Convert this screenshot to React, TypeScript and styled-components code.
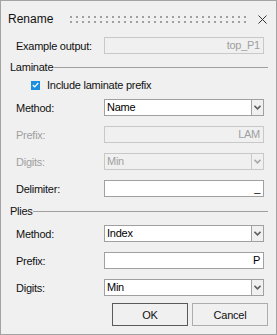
import React from "react";
import styled, { createGlobalStyle } from "styled-components";

const GlobalStyle = createGlobalStyle`
  html, body { margin: 0; padding: 0; background: #f0f0f0; }
  * { box-sizing: border-box; }
`;

const Window = styled.div`
  width: 277px;
  height: 335px;
  border: 1px solid #a3a3a3;
  background: #f0f0f0;
  font-family: "Liberation Sans", Arial, sans-serif;
  font-size: 11px;
  letter-spacing: -0.25px;
  color: #111;
  display: flex;
  flex-direction: column;
`;

const TitleBar = styled.div`
  height: 36px;
  display: flex;
  align-items: center;
  padding-left: 7px;
`;

const Title = styled.span`
  font-size: 12px;
  letter-spacing: 0;
  color: #111;
`;

const GripSvg = styled.svg`
  margin-left: 17px;
  display: block;
`;

const CloseBox = styled.div`
  margin-left: auto;
  width: 28px;
  height: 100%;
  display: flex;
  align-items: center;
  justify-content: center;
`;

const Body = styled.div`
  display: flex;
  flex-direction: column;
  padding: 0 12px 0 15px;
`;

const Row = styled.div<{ $mt?: number }>`
  display: flex;
  align-items: center;
  height: 17px;
  margin-top: ${(p) => p.$mt ?? 10}px;
`;

const Label = styled.span<{ $disabled?: boolean }>`
  width: 88px;
  color: ${(p) => (p.$disabled ? "#a0a0a0" : "#111")};
`;

const Field = styled.div<{ $disabled?: boolean }>`
  flex: 1;
  height: 17px;
  border: 1px solid ${(p) => (p.$disabled ? "#c8c8c8" : "#a0a0a0")};
  background: ${(p) => (p.$disabled ? "#f0f0f0" : "#ffffff")};
  color: ${(p) => (p.$disabled ? "#a0a0a0" : "#000")};
  display: flex;
  align-items: center;
  justify-content: flex-end;
  padding-right: 3px;
  line-height: 15px;
`;

const Select = styled.div<{ $disabled?: boolean }>`
  flex: 1;
  height: 17px;
  border: 1px solid ${(p) => (p.$disabled ? "#c8c8c8" : "#a0a0a0")};
  background: ${(p) => (p.$disabled ? "#f0f0f0" : "#ffffff")};
  color: ${(p) => (p.$disabled ? "#a0a0a0" : "#000")};
  display: flex;
  align-items: stretch;
`;

const SelectText = styled.span`
  flex: 1;
  padding-left: 2px;
  line-height: 15px;
`;

const ArrowBox = styled.div<{ $disabled?: boolean }>`
  width: 12px;
  border-left: 1px solid ${(p) => (p.$disabled ? "#c8c8c8" : "#a0a0a0")};
  background: #f0f0f0;
  display: flex;
  align-items: center;
  justify-content: center;
`;

const GroupHeader = styled.div<{ $mt: number }>`
  display: flex;
  align-items: center;
  height: 14px;
  margin: ${(p) => p.$mt}px -4px 0 -6px;
  color: #111;
`;

const GroupLine = styled.div`
  flex: 1;
  height: 1px;
  background: #a0a0a0;
`;

const CheckRow = styled.label`
  display: flex;
  align-items: center;
  height: 14px;
  margin-top: 4px;
  padding-left: 15px;
  gap: 7px;
`;

const CheckBox = styled.span`
  width: 9px;
  height: 9px;
  background: #1a8fe0;
  display: flex;
  align-items: center;
  justify-content: center;
`;

const ButtonRow = styled.div`
  display: flex;
  justify-content: flex-end;
  gap: 4px;
  margin: 7px -4px 0 0;
`;

const Button = styled.button<{ $default?: boolean }>`
  width: 76px;
  height: 23px;
  border: 1px solid ${(p) => (p.$default ? "#5a5a5a" : "#adadad")};
  background: #f0f0f0;
  font-family: "Liberation Sans", Arial, sans-serif;
  font-size: 11px;
  letter-spacing: -0.2px;
  color: #111;
  padding: 0;
`;

const Arrow = ({ disabled }: { disabled?: boolean }) => (
  <svg width="7" height="5" viewBox="0 0 7 5">
    <path
      d="M0.5 0.8 L3.5 3.8 L6.5 0.8"
      fill="none"
      stroke={disabled ? "#a8a8a8" : "#606060"}
      strokeWidth="1.6"
    />
  </svg>
);

const Grip = () => {
  const dots: React.ReactNode[] = [];
  for (let i = 0; i < 30; i++) {
    const x = Math.round(i * 6);
    dots.push(<rect key={`a${i}`} x={x} y={0} width={2} height={2} fill="#a0a0a0" />);
    dots.push(<rect key={`b${i}`} x={x} y={5} width={2} height={2} fill="#a0a0a0" />);
  }
  return (
    <GripSvg width="176" height="7" viewBox="0 0 176 7">
      {dots}
    </GripSvg>
  );
};

const TextField = ({ value, disabled }: { value: string; disabled?: boolean }) => (
  <Field $disabled={disabled}>{value}</Field>
);

const Combo = ({ value, disabled }: { value: string; disabled?: boolean }) => (
  <Select $disabled={disabled}>
    <SelectText>{value}</SelectText>
    <ArrowBox $disabled={disabled}>
      <Arrow disabled={disabled} />
    </ArrowBox>
  </Select>
);

export default function App() {
  return (
    <>
      <GlobalStyle />
      <Window>
        <TitleBar>
          <Title>Rename</Title>
          <Grip />
          <CloseBox>
            <svg width="9" height="9" viewBox="0 0 9 9">
              <path d="M0.5 0.5 L8.5 8.5 M8.5 0.5 L0.5 8.5" stroke="#333" strokeWidth="1" />
            </svg>
          </CloseBox>
        </TitleBar>
        <Body>
          <Row $mt={0}>
            <Label>Example output:</Label>
            <TextField value="top_P1" disabled />
          </Row>
          <GroupHeader $mt={6}>
            <span>Laminate</span>
            <GroupLine />
          </GroupHeader>
          <CheckRow>
            <CheckBox>
              <svg width="7" height="6" viewBox="0 0 7 6">
                <path d="M0.8 3 L2.7 4.8 L6.2 1" fill="none" stroke="#fff" strokeWidth="1.2" />
              </svg>
            </CheckBox>
            <span>Include laminate prefix</span>
          </CheckRow>
          <Row $mt={7}>
            <Label>Method:</Label>
            <Combo value="Name" />
          </Row>
          <Row>
            <Label $disabled>Prefix:</Label>
            <TextField value="LAM" disabled />
          </Row>
          <Row>
            <Label $disabled>Digits:</Label>
            <Combo value="Min" disabled />
          </Row>
          <Row>
            <Label>Delimiter:</Label>
            <TextField value="_" />
          </Row>
          <GroupHeader $mt={7}>
            <span>Plies</span>
            <GroupLine />
          </GroupHeader>
          <Row $mt={7}>
            <Label>Method:</Label>
            <Combo value="Index" />
          </Row>
          <Row>
            <Label>Prefix:</Label>
            <TextField value="P" />
          </Row>
          <Row>
            <Label>Digits:</Label>
            <Combo value="Min" />
          </Row>
          <ButtonRow>
            <Button $default>OK</Button>
            <Button>Cancel</Button>
          </ButtonRow>
        </Body>
      </Window>
    </>
  );
}
